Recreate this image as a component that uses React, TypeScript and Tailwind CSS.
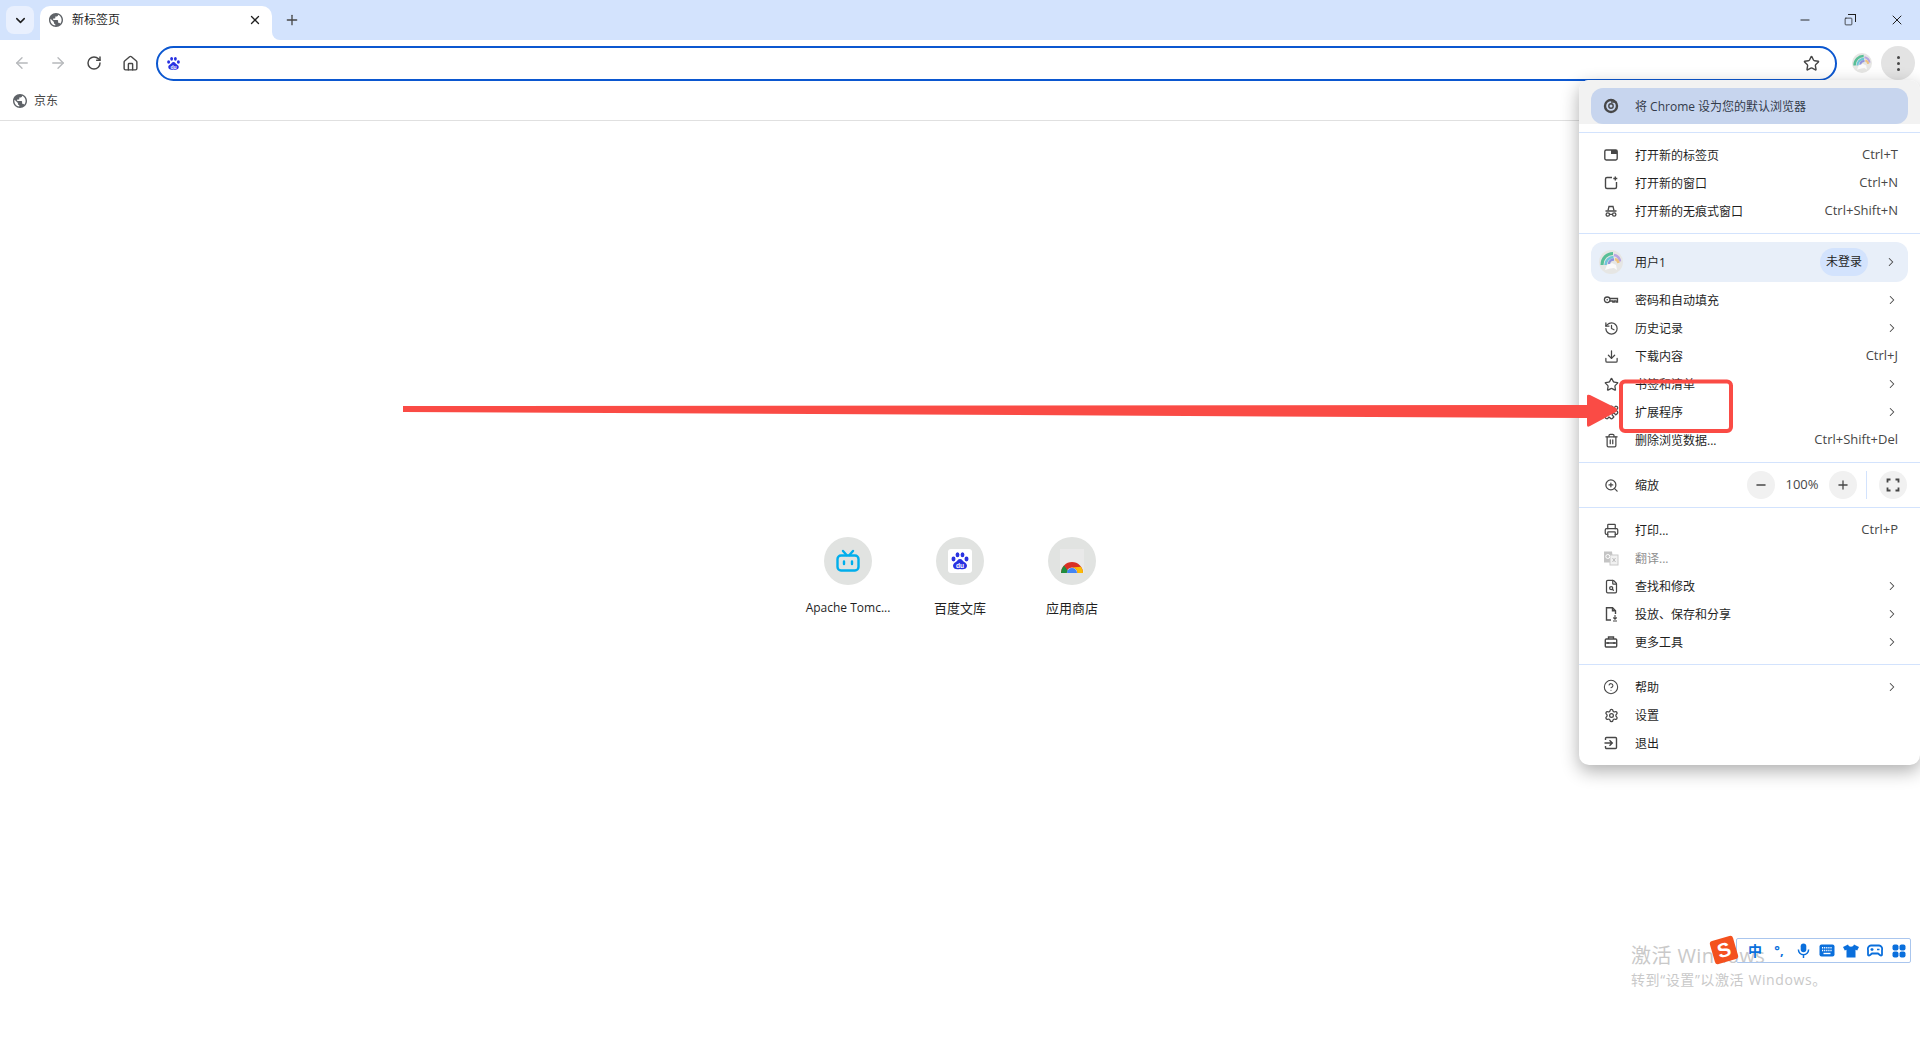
import React from 'react';
import {
  ArrowLeft, ArrowRight, RotateCw, Home, Star, ChevronDown, ChevronRight, X, Plus, Minus, Square,
  History, Download, Puzzle, Trash2, ZoomIn, Printer, FileSearch, CircleHelp, Settings,
} from 'lucide-react';

const FONT = '"Open Sans", "Noto Sans CJK SC", sans-serif';

const Globe = ({ className }: { className?: string }) => (
  <svg viewBox="2 2 20 20" className={className} fill="#5f6368">
    <path d="M12 2C6.48 2 2 6.48 2 12s4.48 10 10 10 10-4.48 10-10S17.52 2 12 2zm-1 17.93c-3.95-.49-7-3.85-7-7.93 0-.62.08-1.21.21-1.79L9 15v1c0 1.1.9 2 2 2v1.93zm6.9-2.54c-.26-.81-1-1.39-1.9-1.39h-1v-3c0-.55-.45-1-1-1H8v-2h2c.55 0 1-.45 1-1V7h2c1.1 0 2-.9 2-2v-.41c2.93 1.19 5 4.06 5 7.41 0 2.08-.8 3.97-2.1 5.39z" />
  </svg>
);

const Paw = ({ className }: { className?: string }) => (
  <svg viewBox="0 0 24 24" className={className} fill="#2932e1">
    <ellipse cx="9" cy="4.5" rx="2.3" ry="3" />
    <ellipse cx="15" cy="4.5" rx="2.3" ry="3" />
    <ellipse cx="4.2" cy="9.6" rx="2.4" ry="2.9" />
    <ellipse cx="19.8" cy="9.6" rx="2.4" ry="2.9" />
    <path d="M12 9.500c-2.600 0-3.400 2.500-5 3.800-2.200 1.400-3.400 2.700-3.400 4.400 0 2.800 2.600 4.300 5.200 4.300 1.300 0 2.200-.4 3.200-.4s1.900.4 3.200.4c2.600 0 5.200-1.500 5.200-4.300 0-1.700-1.200-3-3.400-4.400-1.600-1.300-2.400-3.800-5-3.800z" />
    <text x="12" y="20.5" textAnchor="middle" fontSize="8" fontWeight="700" fill="#fff" fontFamily="Liberation Sans, sans-serif">du</text>
  </svg>
);

const Avatar = ({ size }: { size: number }) => (
  <svg width={size} height={size} viewBox="0 0 24 24">
    <circle cx="12" cy="12" r="12" fill="#e6e6e4" />
    <path d="M3 15C3 8 8 3.500 14 3.500" fill="none" stroke="#58bf96" strokeWidth="3" />
    <path d="M6.500 15c0-4.500 3.500-8 8-8" fill="none" stroke="#6fc6d8" strokeWidth="2.500" />
    <path d="M10 14c0-3 2.500-4.500 5-4.500" fill="none" stroke="#8f93dc" strokeWidth="2.500" />
    <path d="M15 5c3 .5 5.500 3 6 6.500" fill="none" stroke="#b9a4e0" strokeWidth="2.500" />
    <path d="M16 9c2 .5 3 1.500 3.500 4" fill="none" stroke="#eec27f" strokeWidth="2.500" />
    <path d="M6 20l2-5 5-2 4 2 1 5-3-2-4 .5z" fill="#fafafa" />
  </svg>
);

const NewTabIcon = () => (
  <svg viewBox="0 0 16 16" className="w-4 h-4" fill="none">
    <rect x="1.800" y="3" width="12.400" height="10" rx="1.400" stroke="#474747" strokeWidth="1.400" />
    <path d="M8 3h6v4H8z" fill="#474747" />
  </svg>
);

const NewWindowIcon = () => (
  <svg viewBox="0 0 16 16" className="w-4 h-4" fill="none" stroke="#474747" strokeWidth="1.400">
    <path d="M9 2.500H4A1.500 1.500 0 0 0 2.500 4v8A1.500 1.500 0 0 0 4 13.500h8a1.500 1.500 0 0 0 1.500-1.500V7" />
    <path d="M12.300 1.500v4M10.300 3.500h4" />
  </svg>
);

const IncognitoIcon = () => (
  <svg viewBox="0 0 16 16" className="w-4 h-4" fill="none" stroke="#474747" strokeWidth="1.300">
    <path d="M5 7.500l1-4h4l1 4" />
    <path d="M2.500 8h11" />
    <circle cx="4.800" cy="11.500" r="1.700" />
    <circle cx="11.200" cy="11.500" r="1.700" />
    <path d="M6.500 11.300h3" />
  </svg>
);

const KeyIcon = () => (
  <svg viewBox="0 0 16 16" className="w-4 h-4" fill="none" stroke="#474747" strokeWidth="1.300">
    <circle cx="4.200" cy="7.800" r="2.800" />
    <circle cx="4.200" cy="7.800" r="0.800" fill="#474747" stroke="none" />
    <path d="M7 6.500h7.500v3.500h-1.500V8.800h-1.700v1.200H9.800V9H7" />
  </svg>
);

const TranslateIcon = () => (
  <svg viewBox="0 0 16 16" className="w-4 h-4">
    <path d="M1 1.500h8l1.500 11H1z" fill="#c4c4c4" />
    <rect x="7" y="5" width="8" height="10" fill="#f1f1f1" stroke="#c9c9c9" />
    <circle cx="4.800" cy="6.500" r="2" fill="none" stroke="#fff" strokeWidth="1" />
    <path d="M9.500 8l3 4M12.500 8l-3 4" stroke="#bdbdbd" />
  </svg>
);

const CastIcon = () => (
  <svg viewBox="0 0 16 16" className="w-4 h-4" fill="none" stroke="#474747" strokeWidth="1.400">
    <path d="M8 14H3.500V1.800h6l3 3V8" />
    <path d="M9.500 1.800v3h3" />
    <path d="M12 9v4M10.300 11.500l1.700 1.700 1.700-1.700M10 15h4" strokeWidth="1.100" />
  </svg>
);

const ToolboxIcon = () => (
  <svg viewBox="0 0 16 16" className="w-4 h-4" fill="none" stroke="#474747" strokeWidth="1.400">
    <path d="M5.500 5V3h5v2" />
    <rect x="2.300" y="5" width="11.400" height="8" rx="1" />
    <path d="M2 9h12" />
    <path d="M5 8v2M11 8v2" />
  </svg>
);

const ExitIcon = () => (
  <svg viewBox="0 0 16 16" className="w-4 h-4" fill="none" stroke="#474747" strokeWidth="1.400">
    <path d="M2.500 5V3.500a1 1 0 0 1 1-1h9a1 1 0 0 1 1 1v9a1 1 0 0 1-1 1h-9a1 1 0 0 1-1-1V11" />
    <path d="M1.500 8h7.500M6.500 5.200L9.300 8l-2.800 2.800" />
  </svg>
);

const ChromeMono = () => (
  <svg viewBox="0 0 16 16" className="w-4 h-4" fill="none" stroke="#474747">
    <circle cx="8" cy="8" r="6" strokeWidth="2.400" />
    <circle cx="8" cy="8" r="2.200" strokeWidth="1.400" />
    <path d="M8 4h5.500" strokeWidth="1.300" />
  </svg>
);

type RowProps = {
  icon: React.ReactNode;
  label: string;
  shortcut?: string;
  arrow?: boolean;
  disabled?: boolean;
};

const Row = ({ icon, label, shortcut, arrow, disabled }: RowProps) => (
  <div className="flex items-center h-[28px] pl-[24px] pr-[22px]">
    <span className="w-4 h-4 mr-[16px] flex items-center justify-center text-[#474747]">{icon}</span>
    <span className={`flex-1 pt-[1px] text-[12px] ${disabled ? 'text-[#8f8f8f]' : 'text-[#1f1f1f]'}`}>{label}</span>
    {shortcut && <span className="text-[13px] text-[#474747]">{shortcut}</span>}
    {arrow && <ChevronRight size={14} strokeWidth={1.8} className="text-[#474747] mr-[-1px]" />}
  </div>
);

const ico = 'w-[15px] h-[15px]';

const Menu = () => (
  <div className="absolute right-0 top-[80px] w-[341px] bg-white rounded-[10px] shadow-[0_6px_18px_rgba(0,0,0,0.32)] overflow-hidden z-10">
    <div className="border-b border-[#d3e3fd] pb-2">
      <div className="bg-[#f2f2f2] pt-2 px-[12px]">
        <div className="h-[36px] bg-[#c7d5ee] rounded-[12px] flex items-center pl-[12px]">
          <span className="w-4 h-4 mr-[16px]"><ChromeMono /></span>
          <span className="pt-[1px] text-[12px] text-[#333b4a]">将 Chrome 设为您的默认浏览器</span>
        </div>
      </div>
    </div>
    <div className="border-b border-[#d3e3fd] py-2">
      <Row icon={<NewTabIcon />} label="打开新的标签页" shortcut="Ctrl+T" />
      <Row icon={<NewWindowIcon />} label="打开新的窗口" shortcut="Ctrl+N" />
      <Row icon={<IncognitoIcon />} label="打开新的无痕式窗口" shortcut="Ctrl+Shift+N" />
    </div>
    <div className="border-b border-[#d3e3fd] py-2">
      <div className="mx-[12px] mb-[4px] h-[40px] bg-[#e8eff9] rounded-[12px] flex items-center pl-[8px] pr-[10px]">
        <span className="w-6 h-6 mr-[12px]"><Avatar size={24} /></span>
        <span className="flex-1 pt-[1px] text-[12px] text-[#1f1f1f]">用户1</span>
        <span className="h-[28px] w-[48px] rounded-full bg-[#d3e3fd] text-[12px] text-[#1f1f1f] flex items-center justify-center mr-[16px]">未登录</span>
        <ChevronRight size={14} strokeWidth={1.8} className="text-[#474747]" />
      </div>
      <Row icon={<KeyIcon />} label="密码和自动填充" arrow />
      <Row icon={<History className={ico} strokeWidth={2} />} label="历史记录" arrow />
      <Row icon={<Download className={ico} strokeWidth={2} />} label="下载内容" shortcut="Ctrl+J" />
      <Row icon={<Star className={ico} strokeWidth={2} />} label="书签和清单" arrow />
      <Row icon={<Puzzle className={ico} strokeWidth={2} />} label="扩展程序" arrow />
      <Row icon={<Trash2 className={ico} strokeWidth={2} />} label="删除浏览数据..." shortcut="Ctrl+Shift+Del" />
    </div>
    <div className="border-b border-[#d3e3fd] py-2">
      <div className="flex items-center h-[28px] pl-[24px]">
        <span className="w-4 h-4 mr-[16px] flex items-center justify-center">
          <ZoomIn className={`${ico} text-[#474747]`} strokeWidth={2} />
        </span>
        <span className="flex-1 pt-[1px] text-[12px] text-[#1f1f1f]">缩放</span>
        <span className="w-[28px] h-[28px] rounded-full bg-[#f1f1f1] flex items-center justify-center">
          <Minus size={14} strokeWidth={2.2} className="text-[#474747]" />
        </span>
        <span className="w-[54px] text-center text-[13px] text-[#474747]">100%</span>
        <span className="w-[28px] h-[28px] rounded-full bg-[#f1f1f1] flex items-center justify-center">
          <Plus size={14} strokeWidth={2.2} className="text-[#474747]" />
        </span>
        <span className="w-px h-[28px] bg-[#d3e3fd] ml-[9px] mr-[12px]" />
        <span className="w-[28px] h-[28px] rounded-full bg-[#f1f1f1] flex items-center justify-center mr-[13px]">
          <svg viewBox="0 0 14 14" className="w-[14px] h-[14px]" fill="none" stroke="#474747" strokeWidth="1.800">
            <path d="M1.500 4.500v-3h3M9.500 1.500h3v3M12.500 9.500v3h-3M4.500 12.500h-3v-3" />
          </svg>
        </span>
      </div>
    </div>
    <div className="border-b border-[#d3e3fd] py-2">
      <Row icon={<Printer className={ico} strokeWidth={2} />} label="打印..." shortcut="Ctrl+P" />
      <Row icon={<TranslateIcon />} label="翻译..." disabled />
      <Row icon={<FileSearch className={ico} strokeWidth={2} />} label="查找和修改" arrow />
      <Row icon={<CastIcon />} label="投放、保存和分享" arrow />
      <Row icon={<ToolboxIcon />} label="更多工具" arrow />
    </div>
    <div className="py-2">
      <Row icon={<CircleHelp className="w-4 h-4" strokeWidth={1.6} />} label="帮助" arrow />
      <Row icon={<Settings className={ico} strokeWidth={2} />} label="设置" />
      <Row icon={<ExitIcon />} label="退出" />
    </div>
  </div>
);

const Tile = ({ label, latin, children }: { label: string; latin?: boolean; children: React.ReactNode }) => (
  <div className="w-[112px] flex flex-col items-center">
    <div className="w-[48px] h-[48px] rounded-full bg-[#e1e3e1] flex items-center justify-center">{children}</div>
    <div className={`mt-[14px] leading-[18px] text-[#1f1f1f] ${latin ? 'text-[12px]' : 'text-[13px]'}`}>{label}</div>
  </div>
);

const Toolbar = () => (
  <div className="h-[48px] pb-[2px] flex items-center bg-white rounded-t-[8px]">
    <div className="flex items-center pl-[13px] w-[156px]">
      <ArrowLeft size={18} strokeWidth={1.8} className="text-[#b7b9bc] mr-[18px]" />
      <ArrowRight size={18} strokeWidth={1.8} className="text-[#b7b9bc] mr-[18px]" />
      <RotateCw size={16} strokeWidth={2.2} className="text-[#474747] mr-[20px] ml-[1px]" />
      <Home size={17} strokeWidth={2} className="text-[#474747]" />
    </div>
    <div className="w-[1681px] h-[35px] rounded-full border-2 border-[#0b57d0] flex items-center justify-between pl-[8px] pr-[15px]">
      <Paw className="w-[15px] h-[15px]" />
      <Star size={17} strokeWidth={2} className="text-[#474747]" />
    </div>
    <div className="ml-[15px] mr-[9px] w-[20px] h-[20px]"><Avatar size={20} /></div>
    <div className="w-[34px] h-[34px] rounded-full bg-[#e3e3e3] flex flex-col items-center justify-center gap-[3px]">
      <span className="w-[3px] h-[3px] rounded-full bg-[#474747]" />
      <span className="w-[3px] h-[3px] rounded-full bg-[#474747]" />
      <span className="w-[3px] h-[3px] rounded-full bg-[#474747]" />
    </div>
  </div>
);

const Annotation = () => (
  <svg viewBox="0 0 1920 1040" className="absolute inset-0 w-[1920px] h-[1040px] z-20 pointer-events-none">
    <path d="M403 406 L1587 405 L1587 396 Q1587 394 1590 395 L1616 408 Q1618 410 1616 412 L1590 426 Q1587 428 1587 425 L1587 418 L403 412 Z" fill="#fa4b45" />
    <rect x="1621" y="381.500" width="110" height="49.500" rx="4" fill="none" stroke="#fa4b45" strokeWidth="4" />
  </svg>
);

const Watermark = () => (
  <div className="absolute left-[1631px] top-[941px] z-20">
    <div className="text-[20px] leading-[30px] text-[#c9c9c9] tracking-[0.4px]">激活 Windows</div>
    <div className="text-[14px] leading-[20px] text-[#c9c9c9] mt-[-1px] tracking-[0.6px]">转到“设置”以激活 Windows。</div>
  </div>
);

const ImeCell = ({ children }: { children: React.ReactNode }) => (
  <span className="w-[24px] h-full flex items-center justify-center shrink-0">{children}</span>
);

const ImeBar = () => (
  <div className="absolute left-[1736px] top-[938px] w-[175px] h-[25px] border border-[#aac6ee] rounded-[2px] z-30 flex items-center pl-[6px] text-[#0a6fdc]">
    <ImeCell><span className="text-[14px] font-bold leading-none">中</span></ImeCell>
    <ImeCell><span className="text-[13px] font-bold leading-none">°,</span></ImeCell>
    <ImeCell>
      <svg viewBox="0 0 14 16" className="w-[13px] h-[15px]" fill="none" stroke="currentColor" strokeWidth="1.600">
        <rect x="4" y="0.500" width="6" height="9.500" rx="3" fill="currentColor" stroke="none" />
        <path d="M1.500 7a5.500 5.500 0 0 0 11 0M7 12.500V16" />
      </svg>
    </ImeCell>
    <ImeCell>
      <svg viewBox="0 0 16 13" className="w-[16px] h-[13px]">
        <rect x="0.500" y="0.500" width="15" height="12" rx="2" fill="currentColor" />
        <path d="M3 3.700h10M3 6.500h10" stroke="#fff" strokeWidth="1.400" strokeDasharray="1.200 0.900" />
        <path d="M4.500 9.500h7" stroke="#fff" strokeWidth="1.400" />
      </svg>
    </ImeCell>
    <ImeCell>
      <svg viewBox="0 0 16 14" className="w-[16px] h-[14px]" fill="currentColor">
        <path d="M5 .5L0 3l1.800 3.500 1.700-.7V13.500h9V5.800l1.700.7L16 3 11 .5C10.500 2 9.300 2.700 8 2.700S5.500 2 5 .5z" />
      </svg>
    </ImeCell>
    <ImeCell>
      <svg viewBox="0 0 16 14" className="w-[16px] h-[14px]" fill="none" stroke="currentColor" strokeWidth="1.800">
        <path d="M4 1.500h8a3.500 3.500 0 0 1 3 4.500v4.500c0 1-1 1.500-1.800.7L11 9.500H5l-2.200 1.700c-.8.8-1.800.3-1.800-.7V6a3.500 3.500 0 0 1 3-4.500z" />
        <path d="M3.500 5.500h3M5 4v3M10 5.500h2.500" strokeWidth="1.300" />
      </svg>
    </ImeCell>
    <ImeCell>
      <svg viewBox="0 0 14 14" className="w-[14px] h-[14px]" fill="currentColor">
        <rect x="0.500" y="0.500" width="6" height="6" rx="2" />
        <rect x="7.500" y="0.500" width="6" height="6" rx="2" />
        <rect x="0.500" y="7.500" width="6" height="6" rx="2" />
        <rect x="7.500" y="7.500" width="6" height="6" rx="2" />
      </svg>
    </ImeCell>
    <div className="absolute left-[-25px] top-[-1px] w-[24px] h-[24px] rotate-[-16deg] rounded-[3px] bg-[#f4511e] flex items-center justify-center text-white text-[20px] font-bold leading-none" style={{ fontFamily: '"Liberation Sans", sans-serif' }}>S</div>
  </div>
);

export default function App() {
  return (
    <div className="relative w-[1920px] h-[1040px] overflow-hidden bg-white flex flex-col" style={{ fontFamily: FONT }}>
      {/* Tab strip */}
      <div className="h-[40px] bg-[#d3e3fd] flex items-end shrink-0">
        <div className="w-[28px] h-[28px] mb-[6px] ml-[6px] mr-[6px] rounded-[8px] bg-[#e9f0fe] flex items-center justify-center">
          <ChevronDown size={15} strokeWidth={2.4} className="text-[#1f1f1f]" />
        </div>
        <div className="relative w-[232px] h-[34px] pb-[6px] bg-white rounded-t-[10px] flex items-center pl-[9px] pr-[10px]">
          <Globe className="w-[14px] h-[14px] mr-[9px]" />
          <span className="flex-1 text-[12px] text-[#1f1f1f]">新标签页</span>
          <X size={14} strokeWidth={2.2} className="text-[#1f1f1f]" />
          <span className="absolute right-[-8px] bottom-0 w-[8px] h-[8px] bg-white" />
          <span className="absolute right-[-8px] bottom-0 w-[8px] h-[8px] bg-[#d3e3fd] rounded-bl-[8px]" />
        </div>
        <div className="mb-[12px] ml-[12px]"><Plus size={16} strokeWidth={2} className="text-[#474747]" /></div>
        <div className="ml-auto mb-[12px] flex items-center text-[#1f1f1f]">
          <Minus size={14} strokeWidth={1.6} className="mr-[32px]" />
          <span className="relative w-[12px] h-[12px] mr-[33px]">
            <Square size={9} strokeWidth={2} className="absolute left-0 bottom-0" />
            <span className="absolute right-0 top-0 w-[8px] h-[8px] border-t border-r border-[#1f1f1f]" />
          </span>
          <X size={16} strokeWidth={1.5} className="mr-[15px]" />
        </div>
      </div>

      <Toolbar />

      {/* Bookmarks bar */}
      <div className="h-[33px] pb-[7px] border-b border-[#e0e0e0] flex items-center pl-[13px] shrink-0">
        <Globe className="w-[14px] h-[14px] mr-[7px]" />
        <span className="text-[12px] text-[#474747]">京东</span>
      </div>

      {/* New tab page */}
      <div className="flex justify-center pt-[416px]">
        <Tile label="Apache Tomc..." latin>
          <svg viewBox="0 0 24 24" className="w-[24px] h-[24px]" fill="none" stroke="#00aeec" strokeWidth="2.400">
            <rect x="1.500" y="6.500" width="21" height="15" rx="3.500" />
            <path d="M7 2l3.500 4M17 2l-3.500 4" strokeLinecap="round" />
            <path d="M8 12.500v2.500M16 12.500v2.500" strokeLinecap="round" />
          </svg>
        </Tile>
        <Tile label="百度文库">
          <span className="w-[24px] h-[24px] bg-white rounded-[3px] flex items-center justify-center"><Paw className="w-[20px] h-[20px]" /></span>
        </Tile>
        <Tile label="应用商店">
          <svg viewBox="0 0 24 24" className="w-[24px] h-[24px]">
            <rect width="24" height="24" fill="#e9e9e9" />
            <path d="M1 24a11 11 0 0 1 22 0h-5.500a5.500 5.500 0 0 0-11 0z" fill="#d93025" />
            <path d="M1 24a11 11 0 0 1 3-7.500L8 22l-1.500 2z" fill="#1e8e3e" />
            <path d="M23 24a11 11 0 0 0-2-6.300L12 18.500a5.500 5.500 0 0 1 5.500 5.500z" fill="#fbbc04" />
            <path d="M7 24a5 5 0 0 1 10 0z" fill="#4285f4" />
          </svg>
        </Tile>
      </div>

      <Menu />
      <Annotation />
      <Watermark />
      <ImeBar />
    </div>
  );
}
